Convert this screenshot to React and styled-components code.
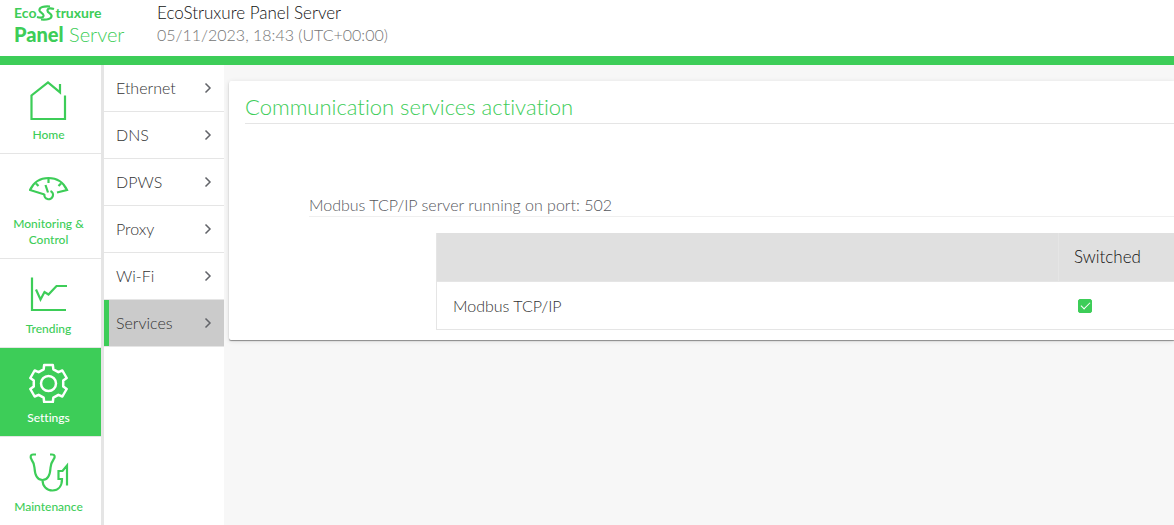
import React from "react";
import styled, { createGlobalStyle, css } from "styled-components";

const green = "#3dcd58";
const line = "#e5e5e5";

const GlobalStyle = createGlobalStyle`
  *, *::before, *::after { box-sizing: border-box; }
  body {
    margin: 0;
    background: #f7f7f7;
    color: #333;
    font-family: Lato, "Open Sans", sans-serif;
    font-size: 16px;
    font-weight: 300;
    font-variant-ligatures: none;
    line-height: 22px;
  }
  #root { min-height: 100vh; display: flex; }
`;

const Page = styled.div`
  flex: 1;
  min-width: 0;
  min-height: 100vh;
  display: flex;
  flex-direction: column;
  overflow: hidden;
`;

const Header = styled.header`
  display: flex;
  gap: 30px;
  padding: 2px 14px 10px;
  background: #fff;
  border-bottom: 9px solid ${green};
`;

const Brand = styled.div`
  display: flex;
  flex-direction: column;
  width: 113px;
  color: ${green};
  white-space: nowrap;
`;

const BrandTop = styled.div`
  display: flex;
  align-items: center;
  height: 22px;
  font-size: 14px;
  font-weight: 700;
`;

const BrandName = styled.div`
  font-size: 20px;
  font-weight: 300;
  line-height: 20px;
  b { font-weight: 900; }
`;

const Device = styled.div`
  color: #111;
  font-size: 17px;
  time { display: block; color: #757575; font-size: 16px; }
`;

const Body = styled.div`
  flex: 1;
  display: flex;
`;

const MainNav = styled.nav`
  flex: none;
  width: 104px;
  background: #fff;
  border-right: 3px solid ${line};
`;

const MainLink = styled.a`
  display: flex;
  flex-direction: column;
  align-items: center;
  gap: 7px;
  padding: 15px 10px 10px 6px;
  border-bottom: 1px solid ${line};
  color: ${green};
  font-size: 12px;
  font-weight: 500;
  line-height: 16px;
  text-align: center;
  text-decoration: none;
  ${(p) => p.$active && css`
    background: ${green};
    color: #fff;
  `}
  svg { display: block; }
`;

const SubNav = styled.nav`
  flex: none;
  width: 120px;
  background: #fff;
`;

const SubLink = styled.a`
  display: flex;
  align-items: center;
  justify-content: space-between;
  height: 47px;
  padding: 0 12px;
  border-bottom: 1px solid ${line};
  color: #333;
  text-decoration: none;
  ${(p) => p.$active && css`
    background: #cbcbcb;
    box-shadow: inset 5px 0 ${green};
  `}
`;

const Content = styled.main`
  flex: 1;
  min-width: 0;
  padding: 16px 0 16px 5px;
`;

const Card = styled.section`
  padding: 12px 0 10px 16px;
  background: #fff;
  border-radius: 2px 0 0 2px;
  box-shadow: 0 1px 1px rgba(0, 0, 0, 0.4), 0 1px 5px rgba(0, 0, 0, 0.12);
`;

const Title = styled.h1`
  margin: 0;
  padding-bottom: 2px;
  border-bottom: 1px solid ${line};
  color: ${green};
  font-size: 22px;
  font-weight: 300;
  line-height: 28px;
`;

const Section = styled.div`
  padding: 70px 0 0 64px;
`;

const SectionTitle = styled.h2`
  margin: 0 0 16px;
  border-bottom: 1px solid #efefef;
  color: #55575c;
  font-size: 16px;
  font-weight: 300;
  line-height: 22px;
`;

const TableWrap = styled.div`
  padding-left: 127px;
`;

const Table = styled.table`
  width: 100%;
  border-collapse: separate;
  border-spacing: 0;
  border-left: 1px solid ${line};
  text-align: left;
  th, td { padding: 0 16px; font-weight: 300; }
  th { height: 49px; background: #e0e0e0; border-bottom: 1px solid ${line}; color: #111; font-size: 17px; }
  th + th { padding-left: 15px; border-left: 1px solid ${line}; }
  td { height: 48px; border-bottom: 1px solid ${line}; }
  th:last-child, td:last-child { width: 116px; }
  td:last-child { padding-left: 20px; }
`;

const Check = styled.input`
  appearance: none;
  display: block;
  width: 14px;
  height: 14px;
  margin: 0;
  border: 1px solid ${green};
  border-radius: 2px;
  background: #fff;
  &:checked {
    background: ${green};
  }
  &:checked::before {
    content: "";
    display: block;
    width: 9px;
    height: 5px;
    margin: 2px 0 0 2px;
    border: solid #fff;
    border-width: 0 0 1px 1px;
    transform: rotate(-45deg);
  }
`;

const Icon = ({ children }) => (
  <svg width="40" height="40" viewBox="0 0 40 40" fill="none" stroke="currentColor" strokeWidth="2.200" aria-hidden="true">
    {children}
  </svg>
);

const gearPath = (() => {
  const pts = [];
  for (let i = 0; i < 6; i++) {
    const a = (i * Math.PI) / 3 - Math.PI / 2;
    [[-0.33, 15], [-0.23, 19], [0.23, 19], [0.33, 15]].forEach(([d, r]) =>
      pts.push(`${(19.5 + r * Math.cos(a + d)).toFixed(2)} ${(20.5 + r * Math.sin(a + d)).toFixed(2)}`)
    );
  }
  return `M${pts.join("L")}Z`;
})();

const mainItems = [
  { label: "Home", icon: <path d="M36 15.500V39H2.500V15.500L19 2.300l12 10V4" /> },
  {
    label: "Monitoring & Control",
    icon: (
      <>
        <path d="M15.500 25.500L1 21C4.500 13.500 11.500 9 19.500 9s15 4.500 18.500 12L28 23.500" />
        <path d="M19.500 10v4M7 14.500l2.500 2.500M32 14.500L29.500 17" />
        <path d="M16.500 16l2.500 7.500M15.500 25a4.300 4.300 0 1 0 6-3" />
      </>
    ),
  },
  { label: "Trending", icon: <path d="M3 3.500v32.500h34M7 15.500l4.500 10 4-7.500 4 2.500L27.500 12H38" /> },
  {
    label: "Settings",
    active: true,
    icon: (
      <g strokeWidth="2.500">
        <path d={gearPath} strokeLinejoin="round" />
        <circle cx="19.500" cy="20.500" r="7.500" />
      </g>
    ),
  },
  {
    label: "Maintenance",
    icon: (
      <path d="M7 2.500H4C1.500 2.500 1 5 2.500 7.500C5 11 5 12 5.500 16c.5 8 3.500 12 8 12s7.500-4 8-12c.5-4 .5-5 3-8.500C26.500 5 26 2.500 23 2.500h-2M13.500 28c0 6 4 10.500 10 10.500s9.500-4.500 9.500-11.500h-3.500v-8h4l4.500-5.500v20" />
    ),
  },
];

const subItems = ["Ethernet", "DNS", "DPWS", "Proxy", "Wi-Fi", "Services"];

export default function App() {
  return (
    <>
      <GlobalStyle />
      <Page>
        <Header>
          <Brand>
            <BrandTop>
              <span>Eco</span>
              <svg width="19" height="16" viewBox="0 0 19 16" fill="none" stroke="currentColor" strokeWidth="2.200" aria-hidden="true">
                <path d="M14 1.500C8 1 3 2 3.500 5.500C4 8 8 8 7.500 11C7 13 4 13 1 12" />
                <path d="M5 14.500C11 15 16 14 15.500 10.500C15 8 11 8 11.500 5C12 3 15 3 18 4" />
              </svg>
              <span>truxure</span>
            </BrandTop>
            <BrandName><b>Panel</b> Server</BrandName>
          </Brand>
          <Device>
            EcoStruxure Panel Server
            <time dateTime="2023-11-05T18:43Z">05/11/2023, 18:43 (UTC+00:00)</time>
          </Device>
        </Header>
        <Body>
          <MainNav aria-label="Main">
            {mainItems.map(({ label, icon, active }) => (
              <MainLink key={label} href="#" $active={active}>
                <Icon>{icon}</Icon>
                {label}
              </MainLink>
            ))}
          </MainNav>
          <SubNav aria-label="Settings">
            {subItems.map((label) => (
              <SubLink key={label} href="#" $active={label === "Services"}>
                {label}
                <svg width="8" height="12" viewBox="0 0 8 12" fill="none" stroke="#626469" strokeWidth="1.500" aria-hidden="true">
                  <path d="M1.500 1.500L6 6l-4.500 4.500" />
                </svg>
              </SubLink>
            ))}
          </SubNav>
          <Content>
            <Card>
              <Title>Communication services activation</Title>
              <Section>
                <SectionTitle>Modbus TCP/IP server running on port: 502</SectionTitle>
                <TableWrap>
                  <Table>
                    <thead>
                      <tr><th aria-label="Service" /><th>Switched</th></tr>
                    </thead>
                    <tbody>
                      <tr>
                        <td><label htmlFor="modbus">Modbus TCP/IP</label></td>
                        <td><Check id="modbus" type="checkbox" defaultChecked /></td>
                      </tr>
                    </tbody>
                  </Table>
                </TableWrap>
              </Section>
            </Card>
          </Content>
        </Body>
      </Page>
    </>
  );
}
